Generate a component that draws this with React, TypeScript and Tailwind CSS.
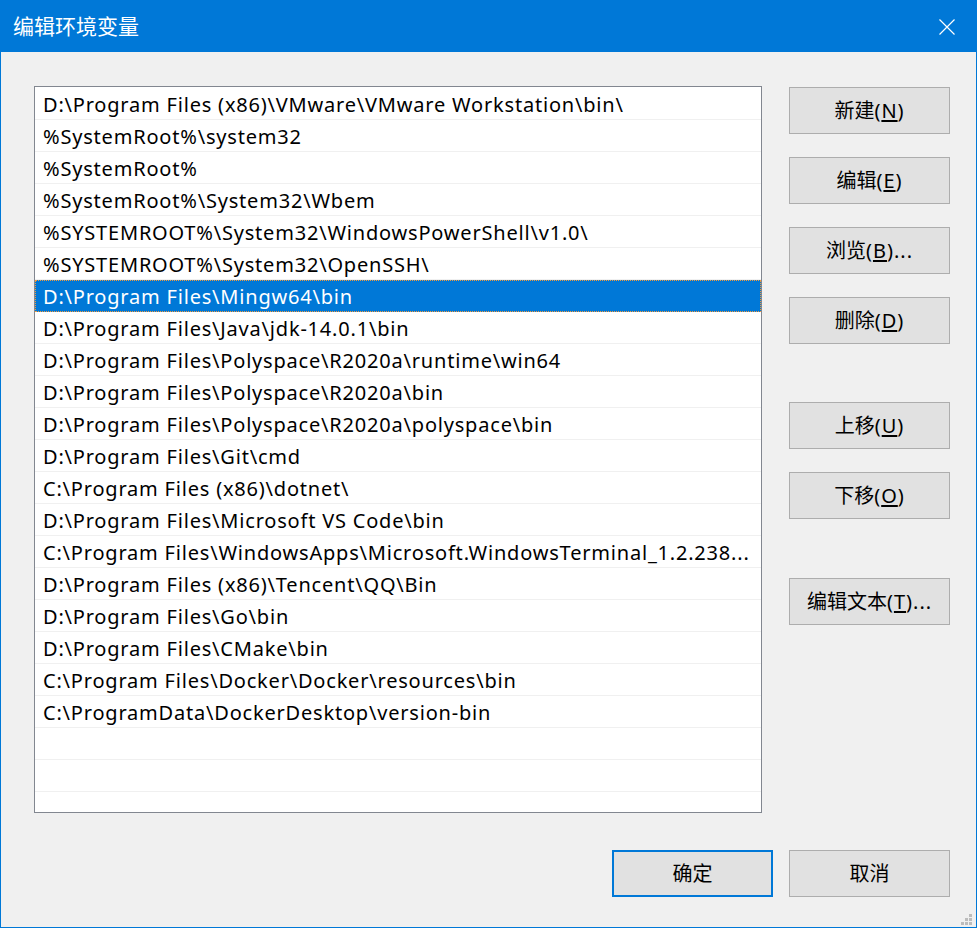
import React from "react"

const paths = [
  "D:\\Program Files (x86)\\VMware\\VMware Workstation\\bin\\",
  "%SystemRoot%\\system32",
  "%SystemRoot%",
  "%SystemRoot%\\System32\\Wbem",
  "%SYSTEMROOT%\\System32\\WindowsPowerShell\\v1.0\\",
  "%SYSTEMROOT%\\System32\\OpenSSH\\",
  "D:\\Program Files\\Mingw64\\bin",
  "D:\\Program Files\\Java\\jdk-14.0.1\\bin",
  "D:\\Program Files\\Polyspace\\R2020a\\runtime\\win64",
  "D:\\Program Files\\Polyspace\\R2020a\\bin",
  "D:\\Program Files\\Polyspace\\R2020a\\polyspace\\bin",
  "D:\\Program Files\\Git\\cmd",
  "C:\\Program Files (x86)\\dotnet\\",
  "D:\\Program Files\\Microsoft VS Code\\bin",
  "C:\\Program Files\\WindowsApps\\Microsoft.WindowsTerminal_1.2.238...",
  "D:\\Program Files (x86)\\Tencent\\QQ\\Bin",
  "D:\\Program Files\\Go\\bin",
  "D:\\Program Files\\CMake\\bin",
  "C:\\Program Files\\Docker\\Docker\\resources\\bin",
  "C:\\ProgramData\\DockerDesktop\\version-bin",
  "",
  "",
  "",
]

const SELECTED = 6

const font = "font-['Noto_Sans','Noto_Sans_CJK_SC',sans-serif]"

function DlgButton({
  label,
  hotkey,
  suffix = "",
  primary = false,
  className = "",
}: {
  label: string
  hotkey?: string
  suffix?: string
  primary?: boolean
  className?: string
}) {
  return (
    <button
      className={
        "w-[161px] h-[47px] bg-[#e1e1e1] text-[20px] text-black flex items-center justify-center " +
        (primary ? "border-2 border-[#0078d7] " : "border border-[#adadad] ") +
        className
      }
    >
      <span>
        {label}
        {hotkey && (
          <span className="tracking-[1px]">
            (<span className="underline underline-offset-2">{hotkey}</span>)
          </span>
        )}
        {suffix && <span className="tracking-[1px]">{suffix}</span>}
      </span>
    </button>
  )
}

export default function App() {
  return (
    <div
      className={
        "relative w-[977px] h-[928px] bg-[#f0f0f0] border border-[#0078d7] flex flex-col " +
        font
      }
    >
      {/* title bar */}
      <div className="h-[51px] bg-[#0078d7] flex items-center justify-between pl-[12px] pr-[21px] shrink-0">
        <span className="text-white text-[21px] leading-none">编辑环境变量</span>
        <svg width="16" height="16" viewBox="0 0 16 16" className="text-white">
          <path d="M0.5 0.5 L15.5 15.5 M15.5 0.5 L0.5 15.5" stroke="currentColor" strokeWidth="1.2" />
        </svg>
      </div>

      <div className="flex-1 flex flex-col pt-[34px] pl-[33px] pr-[26px]">
        <div className="flex gap-[27px]">
          {/* list */}
          <div className="w-[728px] h-[727px] bg-white border border-[#828790] overflow-hidden pt-[1px]">
            {paths.map((p, i) => (
              <div
                key={i}
                className={
                  "h-[32px] pl-[8px] pt-[2px] flex items-center text-[20px] tracking-[0.8px] whitespace-nowrap " +
                  (i === SELECTED
                    ? "bg-[#0078d7] text-white outline-1 outline-dotted outline-[#f49b3c] -outline-offset-1"
                    : "text-black border-b border-[#f0f0f0]")
                }
              >
                {p}
              </div>
            ))}
          </div>

          {/* right side buttons */}
          <div className="flex flex-col pt-[1px]">
            <DlgButton label="新建" hotkey="N" />
            <DlgButton label="编辑" hotkey="E" className="mt-[23px]" />
            <DlgButton label="浏览" hotkey="B" suffix="..." className="mt-[23px]" />
            <DlgButton label="删除" hotkey="D" className="mt-[23px]" />
            <DlgButton label="上移" hotkey="U" className="mt-[58px]" />
            <DlgButton label="下移" hotkey="O" className="mt-[23px]" />
            <DlgButton label="编辑文本" hotkey="T" suffix="..." className="mt-[59px]" />
          </div>
        </div>

        <div className="mt-[37px] flex justify-end gap-[16px]">
          <DlgButton label="确定" primary />
          <DlgButton label="取消" />
        </div>
      </div>

      {/* size grip */}
      <div className="absolute right-[4px] bottom-[2px] grid grid-cols-3 gap-[1px]">
        <span className="w-[3px] h-[3px]" />
        <span className="w-[3px] h-[3px]" />
        <span className="w-[3px] h-[3px] bg-[#bcbcbc]" />
        <span className="w-[3px] h-[3px]" />
        <span className="w-[3px] h-[3px] bg-[#bcbcbc]" />
        <span className="w-[3px] h-[3px] bg-[#bcbcbc]" />
        <span className="w-[3px] h-[3px] bg-[#bcbcbc]" />
        <span className="w-[3px] h-[3px] bg-[#bcbcbc]" />
        <span className="w-[3px] h-[3px] bg-[#bcbcbc]" />
      </div>
    </div>
  )
}
